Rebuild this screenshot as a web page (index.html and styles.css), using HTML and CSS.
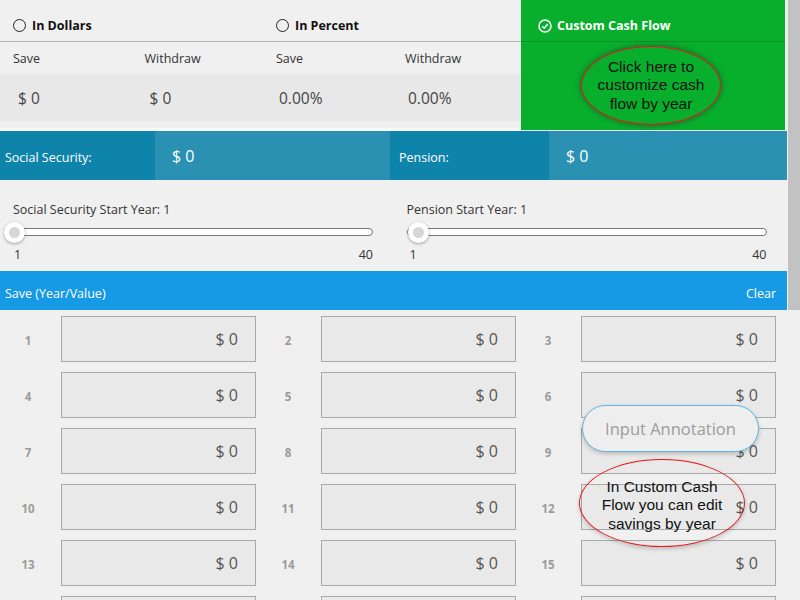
FILE: index.html
```html
<!DOCTYPE html>
<html lang="en">
<head>
  <meta charset="UTF-8">
  <title>Cash Flow</title>
  <link rel="stylesheet" href="styles.css">
</head>
<body>
<div class="window">
  <div class="main">

    <div class="modes">
      <div class="mode">
        <div class="mode-head"><span class="radio"></span>In Dollars</div>
        <div class="mode-sub"><span>Save</span><span>Withdraw</span></div>
        <div class="mode-vals"><span>$ 0</span><span>$ 0</span></div>
      </div>
      <div class="mode mode-pct">
        <div class="mode-head"><span class="radio"></span>In Percent</div>
        <div class="mode-sub"><span>Save</span><span>Withdraw</span></div>
        <div class="mode-vals"><span>0.00%</span><span>0.00%</span></div>
      </div>
      <div class="custom">
        <div class="custom-head">
          <svg class="check" viewBox="0 0 14 14" width="14" height="14">
            <circle cx="7" cy="7" r="6" fill="none" stroke="#fff" stroke-width="1.5"/>
            <path d="M4.2 7.2 L6.2 9.1 L9.9 5" fill="none" stroke="#fff" stroke-width="1.5"/>
          </svg>
          Custom Cash Flow
        </div>
        <div class="note note-click">Click here to<br>customize cash<br>flow by year</div>
      </div>
    </div>

    <div class="income">
      <div class="income-label ss">Social Security:</div>
      <div class="income-val ss-val">$ 0</div>
      <div class="income-label pen">Pension:</div>
      <div class="income-val">$ 0</div>
    </div>

    <div class="sliders">
      <div class="slider">
        <div class="slider-title">Social Security Start Year: 1</div>
        <div class="track"><span class="thumb"></span></div>
        <div class="slider-ends"><span>1</span><span>40</span></div>
      </div>
      <div class="slider slider-pen">
        <div class="slider-title">Pension Start Year: 1</div>
        <div class="track"><span class="thumb"></span></div>
        <div class="slider-ends"><span>1</span><span>40</span></div>
      </div>
    </div>

    <div class="save-bar">
      <span>Save (Year/Value)</span>
      <span>Clear</span>
    </div>

    <div class="years">
      <div class="year"><span class="yr">1</span><div class="box">$ 0</div></div>
      <div class="year"><span class="yr">2</span><div class="box">$ 0</div></div>
      <div class="year"><span class="yr">3</span><div class="box">$ 0</div></div>
      <div class="year"><span class="yr">4</span><div class="box">$ 0</div></div>
      <div class="year"><span class="yr">5</span><div class="box">$ 0</div></div>
      <div class="year"><span class="yr">6</span><div class="box">$ 0</div></div>
      <div class="year"><span class="yr">7</span><div class="box">$ 0</div></div>
      <div class="year"><span class="yr">8</span><div class="box">$ 0</div></div>
      <div class="year"><span class="yr">9</span><div class="box">$ 0</div></div>
      <div class="year"><span class="yr">10</span><div class="box">$ 0</div></div>
      <div class="year"><span class="yr">11</span><div class="box">$ 0</div></div>
      <div class="year"><span class="yr">12</span><div class="box">$ 0</div></div>
      <div class="year"><span class="yr">13</span><div class="box">$ 0</div></div>
      <div class="year"><span class="yr">14</span><div class="box">$ 0</div></div>
      <div class="year"><span class="yr">15</span><div class="box">$ 0</div></div>
      <div class="year"><span class="yr"></span><div class="box"></div></div>
      <div class="year"><span class="yr"></span><div class="box"></div></div>
      <div class="year"><span class="yr"></span><div class="box"></div></div>
    </div>

    <div class="pill">Input Annotation</div>
    <div class="note note-edit">In Custom Cash<br>Flow you can edit<br>savings by year</div>
  </div>
  <div class="scrollbar"><div class="scroll-thumb"></div></div>
</div>
</body>
</html>
```

FILE: styles.css
```css
html, body { margin: 0; padding: 0; }
body { background: #f0f0f0; font-family: "Open Sans", "Noto Sans", sans-serif; color: #333; overflow: hidden; }

.window { display: flex; width: 800px; height: 600px; overflow: hidden; }
.main { position: relative; width: 787px; flex: none; background: #f0f0f0; }
.scrollbar { flex: 1; background: #f0f0f0; }
.scroll-thumb { height: 310px; background: #c2c2c2; margin-left: 1px; }

/* top: modes */
.modes { display: flex; height: 131px; }
.mode { width: 263px; flex: none; height: 131px; box-sizing: border-box; border-bottom: 3px solid #f8f8f8; }
.mode-pct { width: 258px; }
.mode-head { height: 42px; border-bottom: 1px solid #b4b4b4; display: flex; align-items: center; padding: 10px 0 0 13px; box-sizing: border-box; font-weight: 700; font-size: 12.5px; color: #111; }
.radio { width: 11px; height: 11px; border: 1.5px solid #222; border-radius: 50%; margin-right: 6px; }
.mode-sub { display: flex; height: 32px; align-items: center; font-size: 12.5px; color: #333; }
.mode-sub span { width: 131px; padding-left: 13px; }
.mode-vals { display: flex; height: 47px; align-items: center; background: #e8e8e8; font-size: 15.5px; color: #444; }
.mode-vals span { width: 131px; padding-left: 18px; }
.mode-pct .mode-vals span { padding-left: 16px; }

.custom { position: relative; flex: 1; height: 130px; margin-right: 2px; background: #08af2c; }
.custom-head { height: 42px; border-bottom: 1px solid #0a8f25; display: flex; align-items: center; padding: 10px 0 0 17px; box-sizing: border-box; color: #fff; font-weight: 700; font-size: 12.5px; }
.check { margin-right: 5px; }

/* annotations */
.note { position: absolute; border: 1.5px solid #e41818; border-radius: 50%; font-family: "Liberation Sans", Arial, sans-serif; font-size: 15.5px; line-height: 18.5px; color: #111; text-align: center; display: flex; align-items: center; justify-content: center; box-sizing: border-box; }
.note-click { left: 60px; top: 46px; width: 140px; height: 79px; box-shadow: 0 0 5px 1px rgba(50, 50, 50, 0.55); }
.note-edit { left: 579px; top: 459px; width: 166px; height: 88px; padding-top: 5px; box-shadow: 0 2px 4px rgba(0, 0, 0, 0.2); }
.pill { position: absolute; left: 582px; top: 405px; width: 177px; height: 47px; box-sizing: border-box; border: 1.5px solid #5db4e6; border-radius: 24px; background: #eeeeee; color: #9c9c9c; font-size: 16.5px; display: flex; align-items: center; justify-content: center; box-shadow: 0 2px 4px rgba(0, 0, 0, 0.2); }

/* income bar */
.income { display: flex; height: 49px; color: #fff; }
.income-label { display: flex; align-items: center; padding: 3px 0 0 5px; font-size: 12.5px; background: #0f84ab; }
.income-val { display: flex; align-items: center; padding-left: 17px; font-size: 16px; background: #2a91b3; flex: 1; }
.ss { width: 150px; }
.ss-val { flex: none; width: 218px; }
.pen { width: 150px; padding-left: 9px; }

/* sliders */
.sliders { display: flex; height: 91px; }
.slider { width: 395px; padding: 21px 0 0 13px; box-sizing: border-box; }
.slider-title { font-size: 12.5px; color: #333; height: 18px; }
.track { position: relative; margin: 9px 0 0 0; width: 360px; height: 8px; box-sizing: border-box; border: 1px solid #777; border-radius: 4px; background: #fff; }
.thumb { position: absolute; left: -10px; top: -7px; width: 21px; height: 21px; border-radius: 50%; background: #fff; box-shadow: 0 1px 3px rgba(0, 0, 0, 0.35); }
.thumb::after { content: ""; position: absolute; left: 5px; top: 5px; width: 11px; height: 11px; border-radius: 50%; background: #d6d6d6; }
.slider-pen .thumb { left: 0; }
.slider-ends { display: flex; justify-content: space-between; width: 360px; margin-top: 10px; font-size: 12.5px; color: #333; padding-left: 1px; box-sizing: border-box; }
.slider-pen .slider-ends { padding-left: 3px; }

/* save bar */
.save-bar { display: flex; justify-content: space-between; align-items: center; height: 39px; padding: 5px 11px 0 5px; box-sizing: border-box; background: #169ae6; color: #fff; font-size: 12.5px; }

/* year grid */
.years { display: grid; grid-template-columns: repeat(3, 260px); row-gap: 10px; padding-top: 6px; }
.year { display: flex; align-items: center; }
.yr { width: 56px; margin-right: 5px; text-align: center; font-size: 11.5px; font-weight: 700; color: #9b9b9b; padding-top: 3px; }
.box { width: 195px; height: 46px; box-sizing: border-box; border: 1px solid #a8a8a8; background: #e9e9e9; display: flex; align-items: center; justify-content: flex-end; padding: 0 17px 0 0; font-size: 16px; color: #555; }
```
